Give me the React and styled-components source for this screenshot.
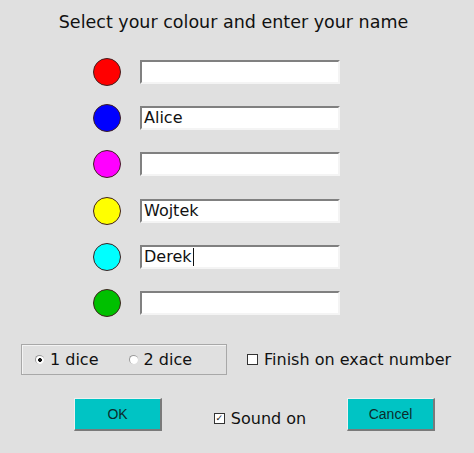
import React from "react";
import styled, { createGlobalStyle } from "styled-components";

const GlobalStyle = createGlobalStyle`
  body {
    margin: 0;
    background: #e0e0e0;
    font-family: "DejaVu Sans", Verdana, sans-serif;
    color: #111;
  }
`;

const players = [
  { color: "#ff0000", name: "" },
  { color: "#0000ff", name: "Alice" },
  { color: "#ff00ff", name: "" },
  { color: "#ffff00", name: "Wojtek" },
  { color: "#00ffff", name: "Derek", caret: true },
  { color: "#00c000", name: "" },
];

const App = () => {
  return (
    <>
      <GlobalStyle />
      <Dialog>
        <Title>Select your colour and enter your name</Title>
        <Players>
          {players.map((p, i) => (
            <Row key={i}>
              <Dot color={p.color} />
              <NameBox>
                {p.name}
                {p.caret && <Caret />}
              </NameBox>
            </Row>
          ))}
        </Players>
        <Options>
          <DiceGroup>
            <Choice>
              <Radio checked />1 dice
            </Choice>
            <Choice>
              <Radio />2 dice
            </Choice>
          </DiceGroup>
          <Choice>
            <Check />
            Finish on exact number
          </Choice>
        </Options>
        <Actions>
          <Button>OK</Button>
          <SoundToggle>
            <Check checked>✓</Check>
            Sound on
          </SoundToggle>
          <Button>Cancel</Button>
        </Actions>
      </Dialog>
    </>
  );
};

export default App;

const Dialog = styled.div`
  width: 474px;
  height: 453px;
  display: flex;
  flex-direction: column;
  box-sizing: border-box;
  padding-top: 9px;
`;

const Title = styled.div`
  font-size: 17.5px;
  text-align: center;
  padding-right: 7px;
  height: 26px;
  line-height: 26px;
`;

const Players = styled.div`
  display: flex;
  flex-direction: column;
  gap: 22.2px;
  padding-left: 93px;
  margin-top: 25px;
`;

const Row = styled.div`
  display: flex;
  align-items: center;
  gap: 19px;
  height: 24px;
`;

const Dot = styled.div`
  width: 26px;
  height: 26px;
  border-radius: 50%;
  background: ${(p) => p.color};
  border: 1px solid #402020;
  flex: none;
`;

const NameBox = styled.div`
  width: 200px;
  height: 24px;
  box-sizing: border-box;
  background: #fff;
  border-top: 2px solid #808080;
  border-left: 2px solid #808080;
  border-right: 2px solid #f4f4f4;
  border-bottom: 2px solid #f4f4f4;
  font-size: 16px;
  line-height: 20px;
  padding-left: 2px;
  display: flex;
  align-items: center;
`;

const Caret = styled.span`
  display: inline-block;
  width: 1px;
  height: 18px;
  background: #111;
  margin-left: 1px;
`;

const Options = styled.div`
  display: flex;
  align-items: center;
  gap: 20px;
  padding-left: 21px;
  margin-top: 29px;
`;

const DiceGroup = styled.div`
  display: flex;
  align-items: center;
  gap: 30px;
  width: 206px;
  height: 31px;
  box-sizing: border-box;
  border: 1px solid #a8a8a8;
  box-shadow: inset 1px 1px 0 #f4f4f4;
  padding-left: 13px;
`;

const Choice = styled.label`
  display: flex;
  align-items: center;
  gap: 6px;
  font-size: 16px;
`;

const SoundToggle = styled(Choice)`
  margin: 9px 0 0 11px;
`;

const Radio = styled.span`
  width: 8px;
  height: 8px;
  border-radius: 50%;
  background: ${(p) =>
    p.checked
      ? "radial-gradient(circle, #111 0 1.6px, #fff 2.2px)"
      : "#fff"};
  border-top: 1px solid #9a9a9a;
  border-left: 1px solid #9a9a9a;
  box-sizing: content-box;
  flex: none;
`;

const Check = styled.span`
  width: 9px;
  height: 9px;
  border: 1px solid #333;
  background: #fff;
  font-size: 9px;
  line-height: 9px;
  text-align: center;
  font-weight: bold;
  flex: none;
`;

const Actions = styled.div`
  display: flex;
  align-items: center;
  justify-content: space-between;
  padding: 0 39px 0 74px;
  margin-top: 23px;
`;

const Button = styled.button`
  width: 88px;
  height: 33px;
  background: #00c4c4;
  border-top: 1px solid #f0f0f0;
  border-left: 1px solid #f0f0f0;
  border-right: 2px solid #7a7a7a;
  border-bottom: 2px solid #7a7a7a;
  font-family: "Liberation Sans", Arial, sans-serif;
  font-size: 14px;
  color: #0c2c2c;
  padding: 0;
`;
